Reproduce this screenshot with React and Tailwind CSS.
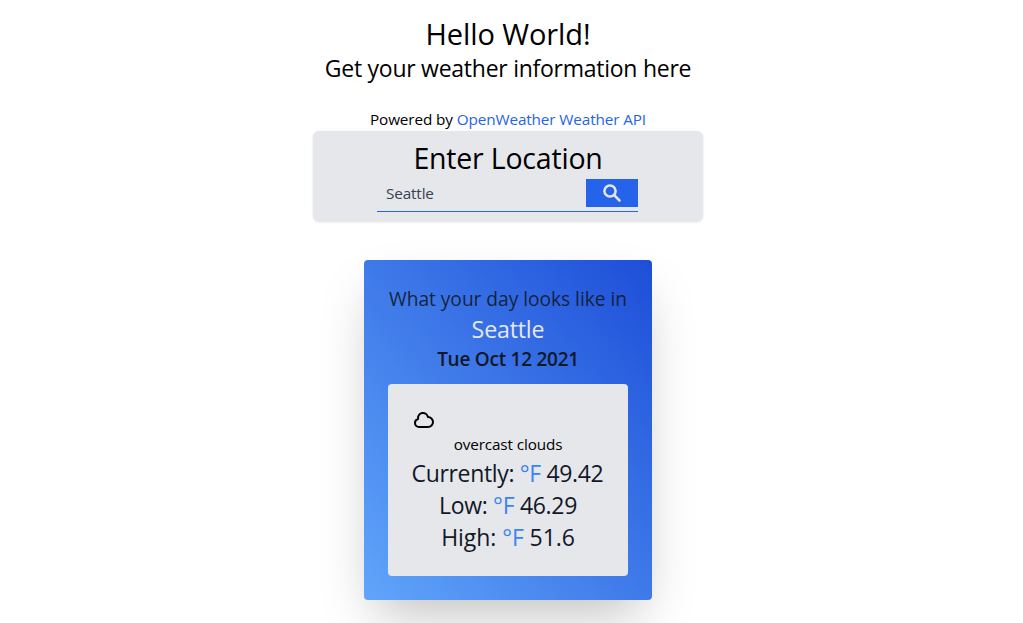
import { HiOutlineCloud } from "react-icons/hi";

function SearchIcon() {
  return (
    <svg viewBox="0 0 18 18" fill="none" stroke="currentColor" strokeWidth="2.5" strokeLinecap="round" className="size-[18px]">
      <circle cx="7" cy="7" r="5.6" />
      <path d="M11.2 11.2l5.3 5.3" />
    </svg>
  );
}

function Header() {
  return (
    <header className="flex flex-col items-center pt-[16px] pl-px text-black">
      <h1 className="text-[29px] leading-9 tracking-[-0.08px]">Hello World!</h1>
      <h2 className="text-[23px] leading-8 tracking-[-0.26px]">Get your weather information here</h2>
      <p className="mt-[23px] h-6 text-[15.3px] leading-6 tracking-[-0.12px]">
        Powered by{" "}
        <a href="#" className="text-[#2563eb]">OpenWeather Weather API</a>
      </p>
    </header>
  );
}

function SearchPanel() {
  return (
    <section className="flex h-[90px] w-[390px] flex-col items-center rounded-md bg-[#e5e7eb] pt-[10px] shadow-sm">
      <h2 className="-mt-px mb-px pl-px text-[28.5px] leading-9 tracking-[-0.2px] text-black">Enter Location</h2>
      <form className="flex h-[35px] w-[261px] items-start border-b border-[#2563eb] pt-[2px]">
        <input
          aria-label="Location"
          defaultValue="Seattle"
          className="h-7 min-w-0 flex-1 bg-transparent px-[9px] text-[15.3px] tracking-[-0.15px] text-[#374151] outline-none"
        />
        <button type="button" aria-label="Search" className="flex h-7 w-[52px] items-center justify-center bg-[#2563eb] text-[#e5e7eb]">
          <SearchIcon />
        </button>
      </form>
    </section>
  );
}

function Temperature({ label, value, className }) {
  return (
    <p className={`whitespace-nowrap text-center text-[23px] leading-8 text-[#111827] ${className}`}>
      {label}: <span className="text-[#3b82f6]">°F</span> {value}
    </p>
  );
}

function WeatherCard() {
  return (
    <section className="mt-[39px] h-[340px] w-[288px] rounded bg-[linear-gradient(to_top_right,#60a5fa,#1d4ed8)] p-6 text-center shadow-2xl">
      <p className="pl-px whitespace-nowrap text-[19.2px] leading-[30px] tracking-[-0.04px] text-[#111827]/90">What your day looks like in</p>
      <p className="-mt-px mb-px pl-px text-[23.2px] leading-8 font-medium tracking-[-0.18px] text-[#e5e7eb]">Seattle</p>
      <p className="-mt-px mb-[11px] pl-px text-[19px] leading-7 font-semibold tracking-[-0.26px] text-[#111827]">Tue Oct 12 2021</p>
      <div className="h-[192px] rounded bg-[#e5e7eb] p-6">
        <HiOutlineCloud className="size-6 text-black" />
        <p className="-mt-px pl-px text-[15.3px] leading-[26px] tracking-[-0.13px] text-black">overcast clouds</p>
        <Temperature label="Currently" value="49.42" className="tracking-[-0.34px]" />
        <Temperature label="Low" value="46.29" className="pl-px tracking-[-0.3px]" />
        <Temperature label="High" value="51.6" className="pl-px tracking-[-0.08px]" />
      </div>
    </section>
  );
}

export default function App() {
  return (
    <main className="flex h-[623px] w-full flex-col items-center overflow-hidden bg-white pr-2 font-['Open_Sans','Noto_Sans',sans-serif]">
      <Header />
      <SearchPanel />
      <WeatherCard />
    </main>
  );
}
